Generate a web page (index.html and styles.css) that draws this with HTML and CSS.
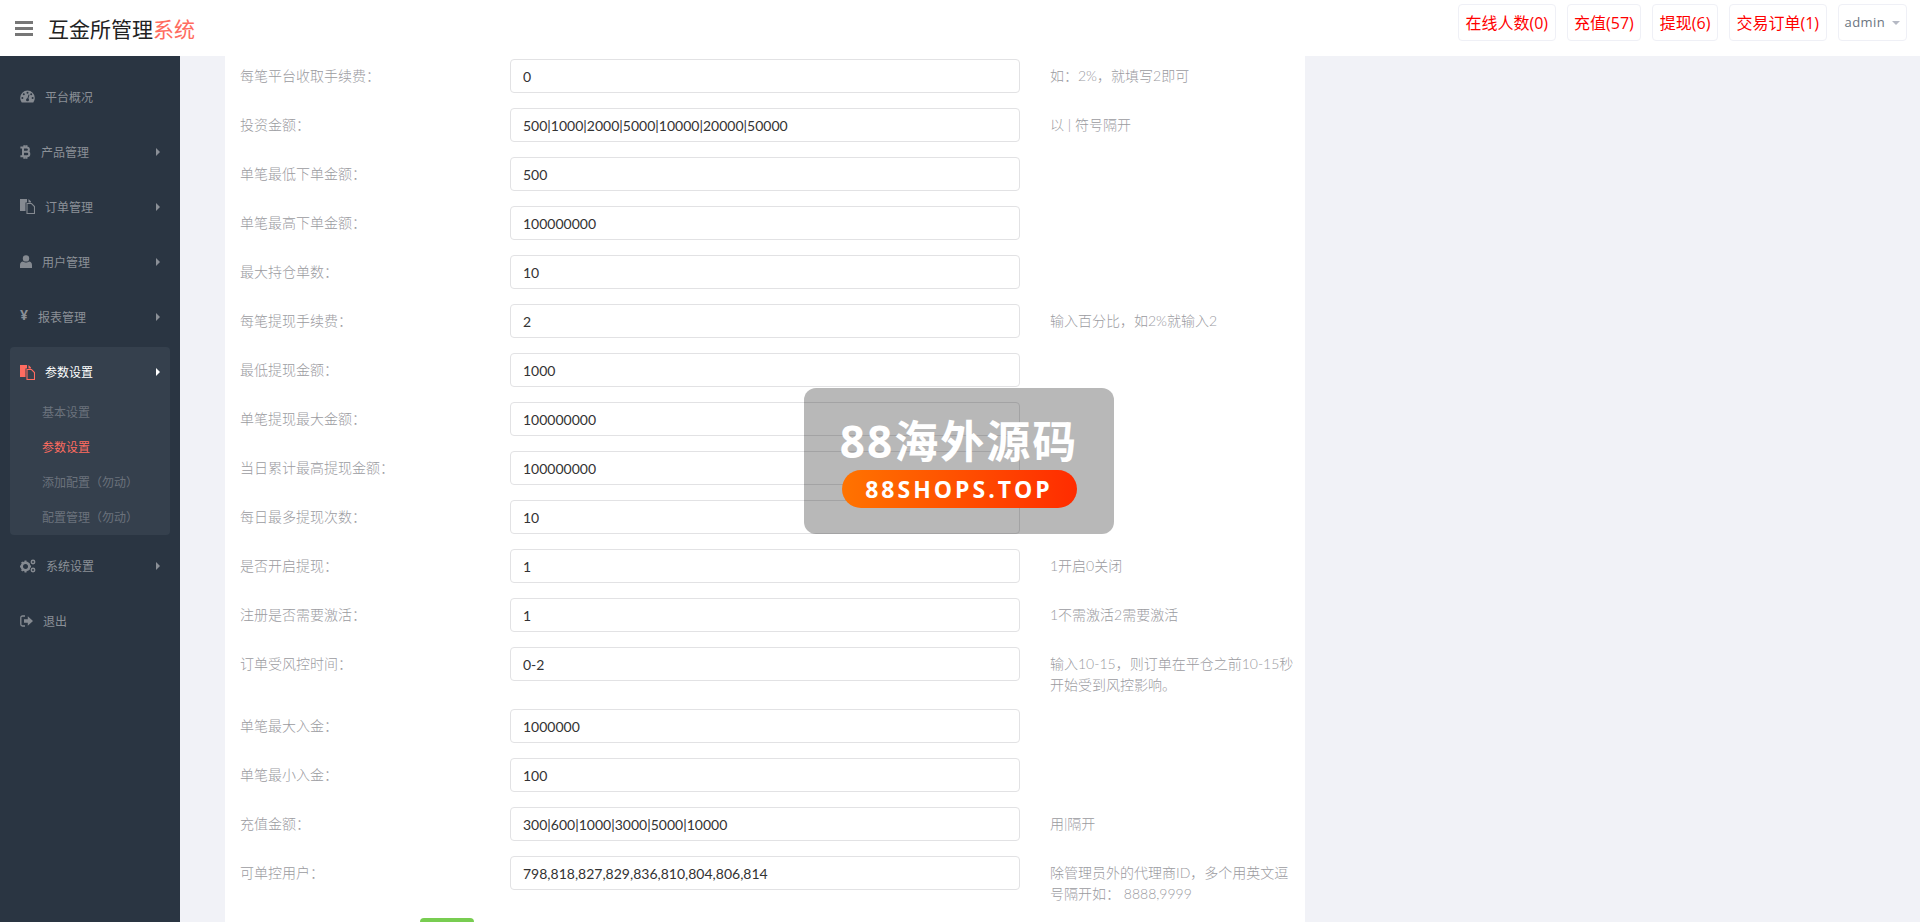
FILE: index.html
```html
<!DOCTYPE html>
<html lang="zh-CN">
	<head>
		<meta charset="UTF-8" />
		<meta name="viewport" content="width=device-width, initial-scale=1.0" />
		<link rel="stylesheet" href="styles.css">
		<title>互金所管理系统</title>
	</head>
	<body>
		<header class="topbar">
			<div class="menu-toggle"><span></span><span></span><span></span></div>
			<div class="brand">互金所管理<span class="brand-accent">系统</span></div>
			<nav class="top-links">
				<a class="top-link">在线人数(0)</a>
				<a class="top-link">充值(57)</a>
				<a class="top-link">提现(6)</a>
				<a class="top-link">交易订单(1)</a>
				<a class="top-user">admin<i class="caret"></i></a>
			</nav>
		</header>

		<div class="layout">
			<aside class="sidebar">
				<a class="nav-item">
					<svg class="nav-icon w15" viewBox="0 0 15 13"><path d="M7.500.5a7.300 7.300 0 0 0-7.300 7.300c0 1.700.6 3.300 1.500 4.700h11.600c.9-1.400 1.500-3 1.500-4.700A7.300 7.300 0 0 0 7.500.5z"/><g fill="#2a3542"><circle cx="7.500" cy="2.700" r="1"/><circle cx="3.800" cy="4.300" r="1"/><circle cx="2.400" cy="8" r="1"/><circle cx="12.600" cy="8" r="1"/><circle cx="11.200" cy="4.300" r="1"/><circle cx="7.500" cy="9.800" r="1.500"/><path d="M7 9.500l1.600-5 .9.300-1.500 5z"/></g></svg>
					<span>平台概况</span>
				</a>
				<a class="nav-item">
					<svg class="nav-icon w10" viewBox="0 0 11 14"><path d="M3 2.500h3.600c1.500 0 2.300.9 2.300 2.100 0 1.300-.9 2.200-2.300 2.200H3m0 0h4c1.400 0 2.300.9 2.300 2.200 0 1.300-.9 2.300-2.400 2.300H3m0-8.800v8.800M.4 2.500H3m-2.600 8.800H3M4.300.2v2.200m2.200-2.200v2.200m-2.200 8.900v2.500m2.200-2.500v2.500" fill="none" stroke="currentColor" stroke-width="2"/></svg>
					<span>产品管理</span>
					<i class="arrow"></i>
				</a>
				<a class="nav-item">
					<svg class="nav-icon w15" viewBox="0 0 15 15"><path d="M0 0h7v3.500H5.500V12H0z"/><path d="M7 4.500h4.500l3 3v7H7z" fill="none" stroke="currentColor" stroke-width="1.100"/><path d="M8.500 0l2.500 2.500v1H8.500z"/></svg>
					<span>订单管理</span>
					<i class="arrow"></i>
				</a>
				<a class="nav-item">
					<svg class="nav-icon w12" viewBox="0 0 12 13"><circle cx="6" cy="3.400" r="3.200"/><path d="M0 13v-3c0-2 1.300-3.500 3-3.500 1 .8 2 1 3 1s2-.2 3-1c1.700 0 3 1.500 3 3.500v3z"/></svg>
					<span>用户管理</span>
					<i class="arrow"></i>
				</a>
				<a class="nav-item">
					<span class="yen">¥</span>
					<span>报表管理</span>
					<i class="arrow"></i>
				</a>

				<div class="nav-group">
					<a class="nav-item nav-item-open">
						<svg class="nav-icon w15" viewBox="0 0 15 15"><path d="M0 0h7v3.500H5.500V12H0z"/><path d="M7 4.500h4.500l3 3v7H7z" fill="none" stroke="currentColor" stroke-width="1.100"/><path d="M8.500 0l2.500 2.500v1H8.500z"/></svg>
						<span>参数设置</span>
						<i class="arrow"></i>
					</a>
					<ul class="sub-nav">
						<li>基本设置</li>
						<li class="sub-active">参数设置</li>
						<li>添加配置（勿动）</li>
						<li>配置管理（勿动）</li>
					</ul>
				</div>

				<a class="nav-item">
					<svg class="nav-icon w16" viewBox="0 0 16 14"><circle cx="5.500" cy="7.500" r="3.700" fill="none" stroke="currentColor" stroke-width="2.400"/><path d="M4.500 1.500h2v2h-2zM4.500 11.500h2v2h-2zM0 6.500h2v2H0zM9 6.500h2v2H9zM1 3.800l1.400-1.400 1.400 1.400-1.400 1.400zM7.200 10l1.400-1.400 1.400 1.400-1.400 1.400zM1 11.200l1.400-1.400 1.400 1.400-1.400 1.400zM7.200 5l1.400-1.400L10 5 8.600 6.400z"/><circle cx="13" cy="3" r="1.700" fill="none" stroke="currentColor" stroke-width="1.500"/><circle cx="13" cy="11" r="1.700" fill="none" stroke="currentColor" stroke-width="1.500"/></svg>
					<span>系统设置</span>
					<i class="arrow"></i>
				</a>
				<a class="nav-item">
					<svg class="nav-icon w13" viewBox="0 0 13 12"><path d="M5 1H2.500A1.700 1.700 0 0 0 .8 2.700v6.600A1.700 1.700 0 0 0 2.500 11H5" fill="none" stroke="currentColor" stroke-width="1.300"/><path d="M4 4.200h3.800V1.200L13 6l-5.200 4.800v-3H4z"/></svg>
					<span>退出</span>
				</a>
			</aside>

			<main class="main">
				<form class="panel">
					<div class="row">
						<label class="row-label">每笔平台收取手续费：</label>
						<input class="row-input" type="text" value="0">
						<p class="row-hint">如：2%，就填写2即可</p>
					</div>
					<div class="row">
						<label class="row-label">投资金额：</label>
						<input class="row-input" type="text" value="500|1000|2000|5000|10000|20000|50000">
						<p class="row-hint">以 | 符号隔开</p>
					</div>
					<div class="row">
						<label class="row-label">单笔最低下单金额：</label>
						<input class="row-input" type="text" value="500">
					</div>
					<div class="row">
						<label class="row-label">单笔最高下单金额：</label>
						<input class="row-input" type="text" value="100000000">
					</div>
					<div class="row">
						<label class="row-label">最大持仓单数：</label>
						<input class="row-input" type="text" value="10">
					</div>
					<div class="row">
						<label class="row-label">每笔提现手续费：</label>
						<input class="row-input" type="text" value="2">
						<p class="row-hint">输入百分比，如2%就输入2</p>
					</div>
					<div class="row">
						<label class="row-label">最低提现金额：</label>
						<input class="row-input" type="text" value="1000">
					</div>
					<div class="row">
						<label class="row-label">单笔提现最大金额：</label>
						<input class="row-input" type="text" value="100000000">
					</div>
					<div class="row">
						<label class="row-label">当日累计最高提现金额：</label>
						<input class="row-input" type="text" value="100000000">
					</div>
					<div class="row">
						<label class="row-label">每日最多提现次数：</label>
						<input class="row-input" type="text" value="10">
					</div>
					<div class="row">
						<label class="row-label">是否开启提现：</label>
						<input class="row-input" type="text" value="1">
						<p class="row-hint">1开启0关闭</p>
					</div>
					<div class="row">
						<label class="row-label">注册是否需要激活：</label>
						<input class="row-input" type="text" value="1">
						<p class="row-hint">1不需激活2需要激活</p>
					</div>
					<div class="row">
						<label class="row-label">订单受风控时间：</label>
						<input class="row-input" type="text" value="0-2">
						<p class="row-hint">输入10-15，则订单在平仓之前10-15秒开始受到风控影响。</p>
					</div>
					<div class="row">
						<label class="row-label">单笔最大入金：</label>
						<input class="row-input" type="text" value="1000000">
					</div>
					<div class="row">
						<label class="row-label">单笔最小入金：</label>
						<input class="row-input" type="text" value="100">
					</div>
					<div class="row">
						<label class="row-label">充值金额：</label>
						<input class="row-input" type="text" value="300|600|1000|3000|5000|10000">
						<p class="row-hint">用|隔开</p>
					</div>
					<div class="row">
						<label class="row-label">可单控用户：</label>
						<input class="row-input" type="text" value="798,818,827,829,836,810,804,806,814">
						<p class="row-hint">除管理员外的代理商ID，多个用英文逗号隔开如： 8888,9999</p>
					</div>
					<button class="save" type="button" aria-label="提交"></button>
				</form>
			</main>
		</div>

		<div class="watermark">
			<div class="watermark-title">88海外源码</div>
			<div class="watermark-pill">88SHOPS.TOP</div>
		</div>
	</body>
</html>
```

FILE: styles.css
```css
* {
	padding: 0;
	margin: 0;
	box-sizing: border-box;
	text-decoration: none;
	font-family: "Open Sans", "Noto Sans CJK SC", sans-serif;
}

html,
body {
	height: 922px;
	overflow: hidden;
}

body {
	background-color: #f1f2f7;
}

.topbar {
	display: flex;
	align-items: center;
	height: 56px;
	padding: 0 13px 0 15px;
	background-color: #ffffff;
}

.menu-toggle {
	display: flex;
	flex-direction: column;
	justify-content: space-between;
	width: 18px;
	height: 15px;
}

.menu-toggle span {
	display: block;
	height: 3px;
	background-color: #777777;
}

.brand {
	margin-left: 15px;
	font-size: 21px;
	color: #222222;
}

.brand-accent {
	color: #ff6c60;
}

.top-links {
	display: flex;
	align-items: center;
	gap: 11px;
	margin-left: auto;
	margin-top: -12px;
}

.top-link,
.top-user {
	display: flex;
	align-items: center;
	height: 37px;
	padding: 0 6.500px;
	border: 1px solid #eff0f6;
	border-radius: 4px;
	font-size: 16px;
	color: #ff0000;
}

.top-user {
	padding: 0 6px;
	font-size: 13px;
	letter-spacing: 0.4px;
	color: #6b7480;
}

.caret {
	width: 0;
	height: 0;
	margin-left: 7px;
	margin-top: 2px;
	border-left: 4px solid transparent;
	border-right: 4px solid transparent;
	border-top: 4px solid #b5b9c4;
}

.layout {
	display: flex;
	height: 866px;
}

.sidebar {
	flex: 0 0 180px;
	padding-top: 13px;
	background-color: #2a3542;
}

.nav-item {
	display: flex;
	align-items: center;
	gap: 10px;
	height: 55px;
	padding: 0 20px;
	font-size: 12px;
	color: #8b9097;
}

.nav-icon {
	flex: none;
	fill: currentColor;
	color: #858a91;
}

.w10 {
	width: 11px;
	height: 14px;
}

.w12 {
	width: 12px;
	height: 13px;
}

.w13 {
	width: 13px;
	height: 12px;
}

.w15 {
	width: 15px;
	height: 15px;
}

.w16 {
	width: 16px;
	height: 14px;
}

.yen {
	width: 8px;
	font-size: 14px;
	font-weight: bold;
	margin-top: -4px;
}

.arrow {
	width: 0;
	height: 0;
	margin-left: auto;
	margin-right: 0;
	border-top: 4px solid transparent;
	border-bottom: 4px solid transparent;
	border-left: 4px solid #8b9097;
}

.nav-group {
	margin: 3px 10px 3px;
	border-radius: 4px;
	background-color: #35404d;
}

.nav-item-open {
	height: 50px;
	padding: 0 10px;
	color: #ffffff;
}

.nav-item-open .nav-icon {
	color: #ff6c60;
}

.nav-item-open .arrow {
	border-left-color: #ffffff;
}

.sub-nav {
	margin-top: -2px;
	list-style: none;
}

.sub-nav li {
	height: 35px;
	padding-left: 32px;
	line-height: 35px;
	font-size: 12px;
	color: #6b727c;
}

.sub-nav .sub-active {
	color: #ff6c60;
}

.main {
	flex: 1;
	overflow: hidden;
}

.panel {
	width: 1080px;
	margin-left: 45px;
	padding: 3px 15px 20px;
	background-color: #ffffff;
}

.row {
	display: grid;
	grid-template-columns: 270px 510px 270px;
	margin-bottom: 15px;
}

.row-label {
	padding-top: 6px;
	font-size: 14px;
	line-height: 22px;
	font-weight: 300;
	color: #9b9b9f;
}

.row-input {
	width: 510px;
	height: 34px;
	padding: 0 12px;
	border: 1px solid #e2e2e4;
	border-radius: 4px;
	font-family: Lato, "Noto Sans CJK SC", sans-serif;
	font-size: 14px;
	color: #333333;
	background-color: #ffffff;
}

.row-hint {
	width: 275px;
	margin-bottom: -1px;
	padding: 6px 0 0 30px;
	font-family: Lato, "Noto Sans CJK SC", sans-serif;
	font-size: 14px;
	line-height: 21px;
	font-weight: 300;
	color: #9b9b9f;
}

.save {
	display: block;
	width: 54px;
	height: 34px;
	margin-left: 180px;
	border: none;
	border-radius: 4px;
	background-color: #78cd51;
}

.watermark {
	position: absolute;
	left: 804px;
	top: 388px;
	display: flex;
	flex-direction: column;
	align-items: center;
	width: 310px;
	height: 146px;
	padding-top: 24px;
	border-radius: 12px;
	background-color: rgba(0, 0, 0, 0.28);
}

.watermark-title {
	height: 58px;
	font-size: 44px;
	line-height: 58px;
	font-weight: bold;
	letter-spacing: 2px;
	color: #ffffff;
}

.watermark-pill {
	width: 235px;
	height: 38px;
	border-radius: 19px;
	line-height: 38px;
	text-align: center;
	font-size: 23px;
	font-weight: bold;
	letter-spacing: 3px;
	color: #ffffff;
	background: linear-gradient(90deg, #ff7300, #ff2c00);
}
```
